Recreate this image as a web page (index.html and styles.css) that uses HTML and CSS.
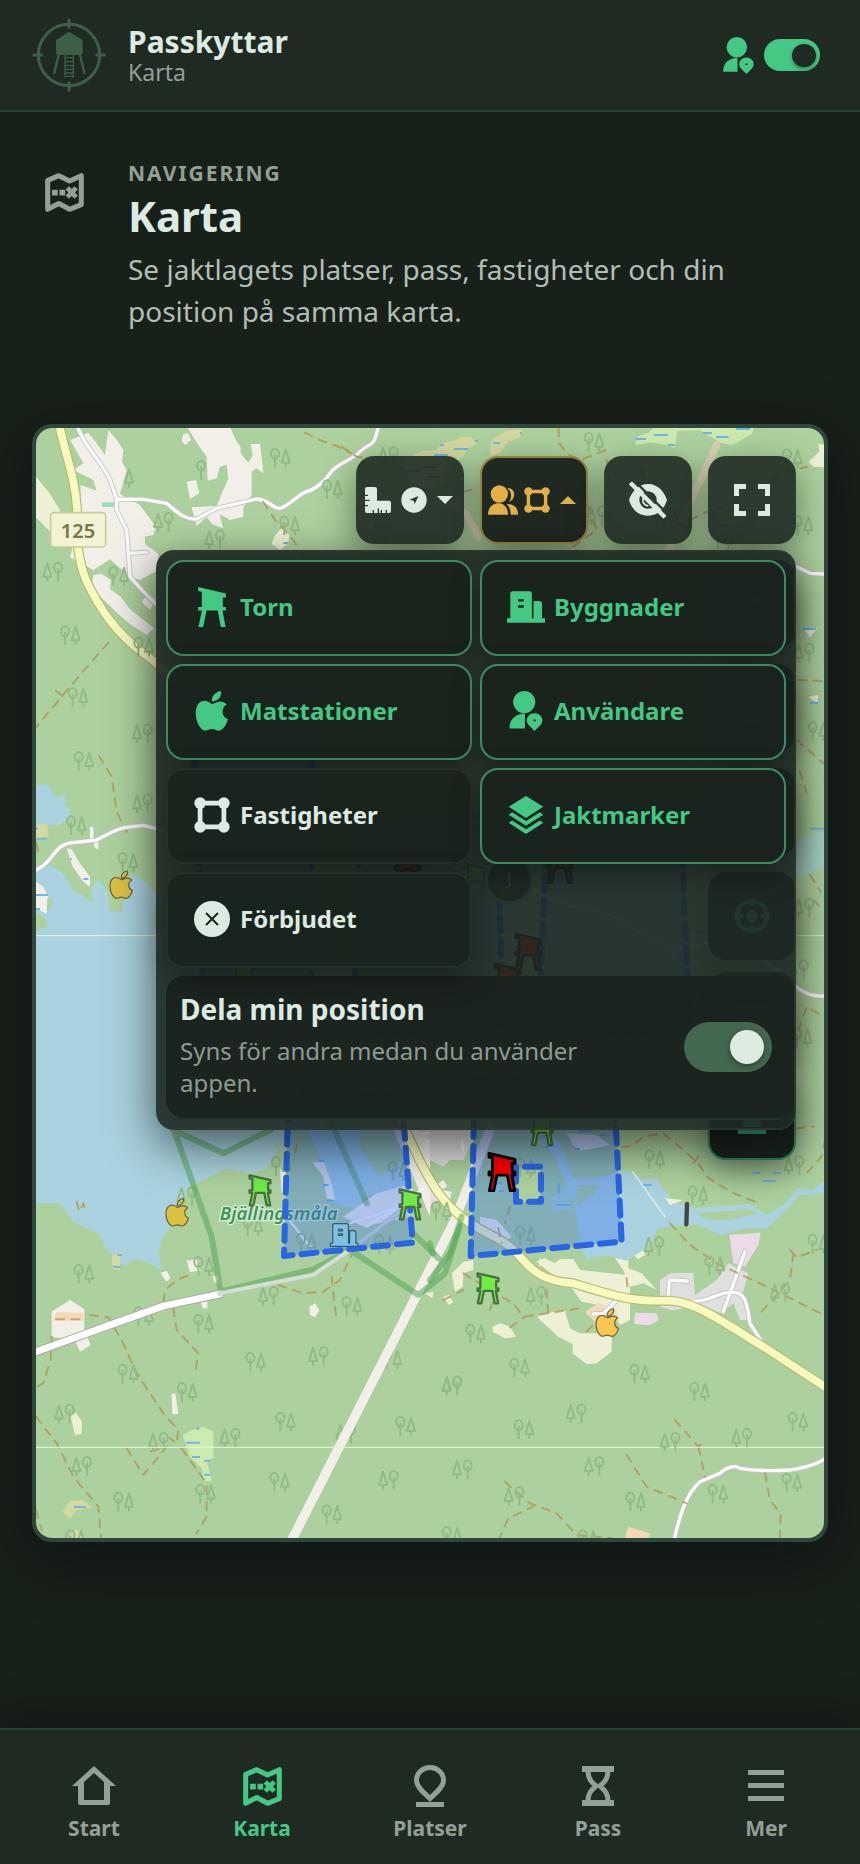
FILE: index.html
```html
<!DOCTYPE html>
<html lang="sv">
<head>
<meta charset="utf-8">
<meta name="viewport" content="width=device-width, initial-scale=1">
<title>Passkyttar – Karta</title>
<link rel="stylesheet" href="styles.css">
</head>
<body>
<svg class="sprite" aria-hidden="true">
  <symbol id="tower" viewBox="0 0 82 118" overflow="visible"><path d="M0 0 82 19V32L73 31V59H82V69H72L81 118H67L58 69H25L15 118H1L11 69H0V59H11V14L0 12Z"/></symbol>
  <symbol id="apple" viewBox="0 0 96 118" overflow="visible"><path d="M74 0C78 17 66 30 48 31C45 16 58 3 74 0ZM50 38C60 35 76 22 92 40C74 48 75 76 95 83C91 98 84 109 75 115C63 121 59 112 48 112C37 112 33 120 21 115C7 104 0 84 0 64C1 34 18 25 34 30C41 32 45 38 50 38Z"/></symbol>
  <symbol id="building" viewBox="0 0 116 96" overflow="visible"><path fill-rule="evenodd" d="M0 82H10V8Q10 0 18 0H68Q76 0 76 8V82H81V30H98Q107 30 107 39V82H116V96H0ZM34 24V31H51V24ZM34 43V50H51V43Z"/></symbol>
  <symbol id="userpin" viewBox="0 0 92 112"><circle cx="41" cy="31" r="31"/><path d="M0 105V98C2 76 20 64 43 63V105Z"/><path fill-rule="evenodd" d="M70 112 54 96C41 82 51 62 70 62S99 82 86 96ZM67 80V85H73V80Z"/></symbol>
  <symbol id="polygon" viewBox="0 0 106 106"><path d="M18 18H88V88H18Z" fill="none" stroke="currentColor" stroke-width="14"/><circle cx="18" cy="18" r="17"/><circle cx="88" cy="18" r="17"/><circle cx="18" cy="88" r="17"/><circle cx="88" cy="88" r="17"/></symbol>
  <symbol id="layers" viewBox="0 0 102 112"><path d="M51 0 102 32 51 65 0 32Z"/><path d="M0 55 10 48 51 74 92 48 102 55 51 88Z"/><path d="M0 79 10 72 51 98 92 72 102 79 51 112Z"/></symbol>
  <symbol id="map" viewBox="0 0 116 116"><path d="M8 22 41 8 73 24 108 8V94L73 108 41 91 8 108Z" fill="none" stroke="currentColor" stroke-width="15" stroke-linejoin="round"/><path d="M21 50H38V67H21ZM43 50H60V67H43Z"/><path d="M71 49 88 67M88 49 71 67" stroke="currentColor" stroke-width="14" fill="none" stroke-linecap="square"/></symbol>
  <symbol id="hourglass" viewBox="0 0 32 40"><path d="M0 0H32V6H0ZM0 34H32V40H0Z"/><path d="M6 5C6 14 11 17 14 20C11 23 6 26 6 35M26 5C26 14 21 17 18 20C21 23 26 26 26 35" fill="none" stroke="currentColor" stroke-width="5"/></symbol>
</svg>

<header class="topbar">
  <svg class="logo" viewBox="0 0 222 222" aria-hidden="true">
    <g fill="none" stroke="currentColor" stroke-width="9" stroke-linecap="round"><circle cx="111" cy="111" r="92"/><path d="M111 5V28M111 194V217M5 111H28M194 111H217"/></g>
    <path fill="currentColor" d="M111 41 152 66V104Q152 111 145 111H79Q72 111 72 104V66Z"/>
    <path fill="none" stroke="currentColor" stroke-width="7" d="M80 110 66 168M144 110 158 168"/>
    <path fill="none" stroke="currentColor" stroke-width="4" d="M99 110V179M124 110V179M99 119H124M99 131H124M99 143H124M99 154H124M99 165H124M99 175H124"/>
  </svg>
  <div class="brand"><strong class="brand-name">Passkyttar</strong><span class="brand-page">Karta</span></div>
  <label class="live">
    <svg class="live-icon" aria-hidden="true"><use href="#userpin"/></svg>
    <input class="switch switch-small" type="checkbox" role="switch" aria-label="Dela position" checked>
  </label>
</header>

<main class="page">
  <section class="intro">
    <svg class="intro-icon" aria-hidden="true"><use href="#map"/></svg>
    <div>
      <p class="eyebrow">NAVIGERING</p>
      <h1 class="title">Karta</h1>
      <p class="lead">Se jaktlagets platser, pass, fastigheter och din position på samma karta.</p>
    </div>
  </section>

  <section class="map" aria-label="Karta">
    <svg class="canvas" viewBox="108 1284 2364 3330" preserveAspectRatio="xMidYMid slice">
      <defs>
        <g id="t1" class="tree"><ellipse cx="13" cy="16" rx="12" ry="15"/><path d="M13 18V57M45 45V57M45 3 57 43H33Z"/></g>
        <g id="t2" class="tree"><path d="M14 45V57M14 3 26 43H2ZM46 18V57"/><ellipse cx="46" cy="16" rx="12" ry="15"/></g>
      </defs>
      <rect class="forest" x="0" y="1200" width="2600" height="3500"/>

      <!-- north-west -->
      <g transform="translate(90 1260)">
        <path class="field" d="M18 170 55 215 90 270 70 345 18 292Z"/>
        <path class="town" d="M120 60 175 38 200 70 225 105 235 30 262 62 280 90 276 125 290 150 270 222 330 255 355 290 378 320 370 345 345 350 345 372 385 402V450L330 480 300 470 240 418 190 450 120 412 150 290 152 195 200 212 190 180 130 150 160 130Z"/>
        <path class="town" d="M190 465 215 462 243 480 240 507 272 530 300 568 372 625 350 645 300 612 268 585 185 505ZM335 545 355 520 378 540 360 570Z"/>
        <path class="town" d="M460 42 475 40 483 60 465 75 455 62ZM470 20H600L620 65 632 80 632 100 655 128 668 105 662 72 690 72 695 110 700 160 680 145 665 155V225L640 262V290L600 300 568 282 580 325 545 312 530 290 500 318 485 262 560 258 595 175 590 135 570 140 560 175 533 182 530 110 505 75ZM470 185 498 180 508 220 480 237Z"/>
        <path class="field" d="M735 345 755 325 778 345 775 370 750 390 725 372Z"/>
        <path class="water" d="M18 1095 50 1093 80 1132 105 1125 105 1155 120 1170V1192L90 1215 18 1213Z"/>
        <path class="marsh" d="M18 1213H52L55 1260H18Z"/>
        <path class="pool" d="M216 247H252V261H216Z"/>
        <g class="reed"><path d="M20 1256H52M760 369H775M18 1226H24"/></g>
        <path class="casing-y" d="M85 0C100 90 137 170 141 270C138 370 145 420 168 480C210 570 260 640 340 700C400 740 450 800 520 860"/>
        <path class="road-y" d="M85 0C100 90 137 170 141 270C138 370 145 420 168 480C210 570 260 640 340 700C400 740 450 800 520 860"/>
        <path class="casing" d="M135 0C160 80 210 115 240 180L260 237V270L290 330 295 400 300 470 340 515 385 560M258 237 340 238 410 250C450 285 470 300 500 297L560 265 680 237C720 240 730 268 750 265S810 220 830 215S880 190 900 160S960 125 990 95S1030 90 1045 20M297 400 350 397"/>
        <path class="road" d="M135 0C160 80 210 115 240 180L260 237V270L290 330 295 400 300 470 340 515 385 560M258 237 340 238 410 250C450 285 470 300 500 297L560 265 680 237C720 240 730 268 750 265S810 220 830 215S880 190 900 160S960 125 990 95S1030 90 1045 20M297 400 350 397M185 1225V1255"/>
        <path class="trail" d="M825 38 870 60 920 78 965 100M700 245 735 300 790 360 820 410M235 668 150 765 95 830 18 922M78 812 97 828 80 850M207 1008 245 1070 260 1175 290 1235"/>
        <use href="#t1" x="722" y="85"/><use href="#t1" x="878" y="180"/><use href="#t2" x="370" y="278"/><use href="#t1" x="750" y="288"/><use href="#t2" x="524" y="330"/><use href="#t2" x="38" y="427"/><use href="#t1" x="237" y="440"/><use href="#t1" x="92" y="618"/><use href="#t1" x="312" y="652"/><use href="#t1" x="115" y="803"/><use href="#t2" x="307" y="912"/><use href="#t1" x="133" y="995"/><use href="#t2" x="307" y="1122"/><use href="#t1" x="110" y="1188"/>
        <g class="tree"><ellipse cx="513" cy="137" rx="12" ry="15"/><path d="M513 140V180M297 190V203M297 148 309 188H285Z"/></g>
        <rect class="shield" x="62" y="278" width="165" height="103" rx="10"/>
        <text class="shield-text" x="144" y="353" text-anchor="middle">125</text>
      </g>

      <!-- north-east -->
      <g transform="translate(1020 1260)">
        <path class="marsh" d="M185 125 245 92 290 90 300 72 345 62 365 50 395 52 412 70 380 90 370 112 330 130 320 180 270 205 215 190ZM450 95 455 60 500 32 545 28 540 52 505 65 480 100 450 108Z"/>
        <path class="meadow" d="M885 75 895 48 925 38 940 24H1242L1235 42 1205 60 1180 75 1145 70 1080 30 1012 32 1005 85 970 72 930 68Z"/>
        <path class="field" d="M1460 75 1435 72 1438 95 1405 125 1420 140 1460 142Z"/>
        <path class="cut" d="M1130 75 980 400M335 245 380 285 415 350"/>
        <g class="reed"><path d="M300 75H312M342 87H384M282 105H324M460 69H480M404 63H414M540 39H546M250 141H294M196 153H240M258 171H300M942 45H984M1088 39H1116M1128 51H1166M1188 27H1230M887 57H918M984 75H1004M1152 315H1194M1216 303H1250M1104 333H1146"/></g>
        <path class="trail" d="M655 25 658 70 680 100 720 120 800 90M700 380 770 330 720 190M800 120 810 180M1010 320 1090 280 1200 240 1330 160 1400 140M5 80 50 110 120 120M370 215 410 205"/>
        <path class="casing" d="M1370 440 1410 460 1470 463"/><path class="road" d="M1370 440 1410 460 1470 463"/>
        <use href="#t2" x="115" y="80"/><use href="#t1" x="733" y="37"/><use href="#t1" x="1328" y="87"/><use href="#t2" x="740" y="258"/><use href="#t1" x="1360" y="288"/><use href="#t2" x="92" y="308"/><use href="#t1" x="860" y="145"/><use href="#t1" x="1120" y="330"/><use href="#t1" x="960" y="275"/>
      </g>

      <!-- east shore and the middle under the panel -->
      <g transform="translate(1410 2490)">
        <path class="water" d="M-300 60 100 -60 640 -100 980 30 1080 -5V110L978 142 640 120 660 420 500 640 0 560Z" opacity=".6"/>
        <path class="field" d="M1000 -605H1042L1020 -577ZM1015 -400 1045 -405 1042 -380Z"/>
        <g class="reed"><path d="M997 -603H1038M1020 -381H1044M1020 -4H1070"/></g>
        <path class="trail" d="M985 -450 1060 -447M980 -270 1060 -200M990 -175 1010 -110M1020 135 1052 185M1030 210 1060 240M985 600 1010 530 1060 560"/>
        <path class="casing" d="M-300 200 0 100 120 130C230 210 330 240 400 250S540 350 620 350S760 320 850 370S980 510 1070 497"/><path class="road" d="M-300 200 0 100 120 130C230 210 330 240 400 250S540 350 620 350S760 320 850 370S980 510 1070 497"/>
        <use href="#t2" x="972" y="-560"/><use href="#t1" x="1015" y="-325"/><use href="#t2" x="972" y="205"/><use href="#t2" x="955" y="390"/><use href="#t1" x="968" y="595"/>
      </g>

      <!-- lake -->
      <g transform="translate(90 2520)">
        <path class="water" d="M18 95 60 75 95 95 130 150 190 188 182 145 205 120 232 150 240 215 275 216 300 100 340 120 378 160 900 200 1000 700 870 870H790L760 905 710 988 660 1000 590 985 540 1010 480 1040 440 1130 400 1190 385 1230 395 1290 350 1265 310 1255 285 1280 230 1230 205 1180 130 1145 90 1090 18 1090Z"/>
        <path class="town" d="M110 25 125 28 150 70 180 110V140L160 125 128 80ZM18 125 40 140 55 170 50 222 18 205ZM190 0H205V30L193 20Z"/>
        <path class="forest" d="M52 175 68 172 66 195 50 215ZM18 215 50 240 52 265 18 268ZM375 190H400V280L372 260Z"/>
        <path class="casing" d="M0 95C30 90 50 70 65 50S95 10 130 8L200 0C240 -20 260 -35 290 -38L340 -44 400 -28"/>
        <path class="road" d="M0 95C30 90 50 70 65 50S95 10 130 8L200 0C240 -20 260 -35 290 -38L340 -44 400 -28"/>
        <path class="water" d="M830 860H990L985 915 1050 1012 1130 950V1035L1000 1070 985 1110 910 1090 890 1000 870 950Z"/>
        <path class="town" d="M848 968 880 960 905 1030 915 1080 890 1075 880 1010ZM750 990 770 985 775 1040 755 1060ZM940 1130 1040 1060 1130 1035 1160 1060 1140 1130 1000 1160ZM1090 870H1200V1130L1150 1010Z"/>
        <path class="grey" d="M1130 840H1330V900L1300 960 1240 960 1200 900Z"/>
        <path class="road thin" d="M1180 880 1240 870 1290 870 1300 930M1220 890 1235 960M1190 905 1290 900M1010 1160 1090 1110 1200 1030M770 1130 860 1245M960 1150 1110 1100"/>
        <g class="reed"><path d="M18 165H54M18 207H30M160 117H175M864 963H884M878 1035H896M890 1082H912M120 57H125"/></g>
        <path class="trail" d="M800 915 790 960M140 1085 148 1115 160 1090 168 1115M20 10 25 40"/>
        <path class="seam" d="M0 287H2500"/>
        <use href="#t1" x="265" y="38"/><use href="#t1" x="725" y="950"/><use href="#t1" x="1075" y="965"/><use href="#t2" x="440" y="1040"/><use href="#t1" x="640" y="1130"/>
      </g>

      <!-- south-west -->
      <g transform="translate(90 3690)">
        <path class="town" d="M65 245 120 210 163 238V300L182 345 150 365 135 330 65 320ZM470 92 500 88 512 122 480 126ZM392 128 410 122 422 145 408 155ZM548 138 565 138 562 160 552 155ZM512 215 532 215 532 235 518 235ZM838 230 855 220 868 240 855 262 840 255ZM425 492 436 490 445 552 427 553Z"/>
        <path class="orange" d="M78 246 160 248V272H72Z"/>
        <path class="marsh" d="M245 75 280 65 270 85 270 122 248 115ZM97 845 120 812 155 810 188 832 140 840 120 868ZM125 905 145 898 162 930H120Z"/>
        <path class="field" d="M122 560 138 548 156 575 155 612 135 614ZM1185 190 1210 185 1208 205ZM1240 200 1260 195V225Z"/>
        <path class="meadow" d="M458 615 485 600 520 590 550 605V685L530 690 545 752 522 755 515 715 480 680Z"/>
        <g class="reed"><path d="M262 75H276M250 111H272M468 638H510M498 596H508M486 681H510M522 692H541M522 734H541M132 831H168"/></g>
        <path class="trail" d="M180 255 235 262 280 340 320 430 400 550 445 600 440 640 420 625M290 655 340 735 410 650 360 665M455 655 530 760 530 860 500 910M430 235 440 300 505 370 495 430M400 215 405 180 440 150 490 130M65 320 62 390 40 460 20 470M18 560 80 640 130 740 205 830 213 925M18 840 35 900M745 165 820 190 880 185 930 150 965 75M905 140 910 190 920 275M78 268 160 268"/>
        <use href="#t1" x="133" y="103"/><use href="#t1" x="492" y="80"/><use href="#t2" x="685" y="170"/><use href="#t1" x="937" y="200"/><use href="#t1" x="492" y="253"/><use href="#t2" x="835" y="350"/><use href="#t1" x="648" y="367"/><use href="#t1" x="265" y="403"/><use href="#t1" x="443" y="458"/><use href="#t2" x="73" y="523"/><use href="#t1" x="738" y="547"/><use href="#t1" x="1098" y="560"/><use href="#t2" x="355" y="607"/><use href="#t2" x="570" y="595"/><use href="#t2" x="125" y="680"/><use href="#t1" x="720" y="727"/><use href="#t2" x="1045" y="722"/><use href="#t1" x="252" y="787"/><use href="#t1" x="498" y="763"/><use href="#t1" x="877" y="825"/><use href="#t1" x="312" y="230"/><use href="#t1" x="1057" y="360"/><use href="#t2" x="1235" y="440"/><use href="#t2" x="917" y="583"/><use href="#t1" x="800" y="10"/><use href="#t1" x="1035" y="15"/><use href="#t1" x="108" y="900"/>
        <path class="rail" d="M770 960 1270 -20 1380 -300"/>
        <path class="reserve" d="M430 -300 580 -230 720 -300M432 -300 545 20 572 185 850 118 960 60 1165 195 1245 130 1290 -10M1150 10 1225 85M900 -330 1010 -80"/>
        <path class="casing wide" d="M0 372 240 285 400 228 570 192"/><path class="road wide" d="M0 372 240 285 400 228 570 192"/>
        <path class="casing" d="M570 190 850 135 960 60 1110 -55"/><path class="road tint" d="M570 190 850 135 960 60 1110 -55"/>
      </g>

      <!-- south-east -->
      <g transform="translate(1290 3360)">
        <path class="grey" d="M0 20 60 0H110L90 90 40 140 0 120Z"/>
        <path class="pink" d="M0 200 25 240 0 262ZM615 578 680 580 686 600 660 616 612 612ZM898 345 992 338 985 375 945 440 910 430Z"/>
        <path class="town" d="M5 205 40 180 52 198 35 210 65 215 60 240 30 235ZM150 60 185 30 150 130ZM330 415 345 425 325 440Z"/>
        <path class="field" d="M100 425 130 420 130 450 100 460 98 500 75 515 65 460ZM40 535 55 525 70 545 58 555ZM320 425 345 415 375 430 390 418 430 417 450 450 590 465 600 510 600 600 570 615 540 560 455 545 425 505 350 450ZM555 415H595V445L635 460 680 510 640 490 600 500 580 450ZM610 405 640 390 645 405 625 418ZM320 590 370 575 405 572 420 625 450 640H545V695L500 730 470 733 428 700V672L385 650ZM188 620 210 610 240 620 258 650 225 655 188 635Z"/>
        <path class="orange" d="M465 575 505 548 560 568 562 600 500 612ZM595 1220 660 1240 655 1262H583Z"/>
        <path class="pool2" d="M170 180 210 185 215 215 180 225ZM360 230 400 200 420 190 420 270 375 278 358 260Z"/>
        <path class="water" d="M350 50 385 60 405 110 430 175 520 172 560 155 608 155 640 180 680 175 700 205 730 245 790 265 960 252 1010 285 1060 255 1105 205 1150 210 1192 175V220L1110 225 1060 280 1010 325 950 325 870 345 800 312 720 320 682 325 670 360 640 390 590 422 540 408 470 418 450 370 430 240 400 170 340 50Z"/>
        <path class="forest" d="M800 280 960 268 985 280 900 300 830 298ZM440 195 515 195 490 225 440 260Z"/>
        <path class="grey" d="M690 480 720 460 790 458 795 525 860 480 895 430 955 460 935 530 955 600 930 600 910 550 875 580 820 558 725 570 690 560Z"/>
        <path class="field" d="M705 235 760 240 720 255Z"/>
        <path class="town" d="M410 40 500 45 540 75 450 92 430 75ZM150 290 200 300 245 350 230 362 150 330Z"/>
        <g class="reed"><path d="M445 33H486M510 45H528M435 87H450M330 50H345M342 81H356M640 195H665M378 255H420M386 190V220M200 190H215M206 213H222M968 159H990M1028 159H1052M998 183H1038"/></g>
        <path class="casing" d="M715 535 718 480 772 483M770 545C850 545 850 520 900 517S950 550 960 610L998 670M945 395 880 575M490 582 520 580 560 540"/>
        <path class="road" d="M715 535 718 480 772 483M770 545C850 545 850 520 900 517S950 550 960 610L998 670M945 395 880 575M490 582 520 580 560 540"/>
        <path class="casing-y" d="M-110 -60C-60 60 -10 190 60 260S190 340 240 380S300 480 430 490C560 530 600 545 720 542C800 545 900 620 1000 680L1200 810"/>
        <path class="road-y" d="M-110 -60C-60 60 -10 190 60 260S190 340 240 380S300 480 430 490C560 530 600 545 720 542C800 545 900 620 1000 680L1200 810"/>
        <path class="path" d="M608 155 705 290"/>
        <path class="dam" d="M771 252 769 313"/>
        <path class="casing" d="M730 1270C750 1180 770 1120 810 1085L870 1060C890 1040 915 1035 930 1045C990 1055 1080 1050 1080 1050S1160 1040 1192 1010"/>
        <path class="road" d="M730 1270C750 1180 770 1120 810 1085L870 1060C890 1040 915 1035 930 1045C990 1055 1080 1050 1080 1050S1160 1040 1192 1010"/>
        <path class="trail" d="M575 80 605 78 640 50 700 40 760 90 805 130 830 170 900 215 975 245M805 110 790 130M1185 60 1175 110 1120 170M1100 25 1150 20M720 310 780 375 860 430 1000 495 1192 590M1080 390 1100 412 1160 390M1090 400 1080 480 990 580M100 460 180 510 250 550 280 590 350 580 450 565M350 510 355 590M240 622 285 590M40 540 100 510M180 570 190 540M590 475 592 500M470 635 510 595M735 900 805 980 822 965M805 980 825 1070M590 1005 650 1100 770 1150M225 1085 300 1150 380 1180 440 1245 550 1255M205 1262 235 1195 310 1160M1005 1060 1020 1140 1052 1180 1050 1262M240 260 225 310M205 325 215 370"/>
        <path class="reserve" d="M0 480 60 400 95 290M0 370 10 400"/>
        <path class="seam" d="M-1300 982H1300"/>
        <use href="#t1" x="645" y="90"/><use href="#t2" x="1062" y="108"/><use href="#t1" x="775" y="198"/><use href="#t1" x="258" y="318"/><use href="#t1" x="1135" y="343"/><use href="#t2" x="642" y="350"/><use href="#t1" x="825" y="408"/><use href="#t2" x="1020" y="490"/><use href="#t2" x="288" y="500"/><use href="#t1" x="108" y="613"/><use href="#t1" x="240" y="715"/><use href="#t1" x="600" y="733"/><use href="#t1" x="780" y="787"/><use href="#t2" x="37" y="768"/><use href="#t2" x="408" y="852"/><use href="#t1" x="253" y="900"/><use href="#t1" x="1075" y="877"/><use href="#t2" x="690" y="937"/><use href="#t2" x="905" y="925"/><use href="#t2" x="67" y="1020"/><use href="#t2" x="462" y="1010"/><use href="#t1" x="1057" y="1060"/><use href="#t1" x="835" y="1093"/><use href="#t2" x="222" y="1100"/><use href="#t1" x="588" y="1117"/><use href="#t1" x="37" y="1220"/><use href="#t1" x="445" y="1230"/><use href="#t1" x="258" y="115"/><use href="#t1" x="5" y="245"/><use href="#t2" x="855" y="50"/>
      </g>

      <text class="place" x="836" y="3660" text-anchor="middle">Bjällingsmåla</text>

      <!-- hunting grounds -->
      <path class="zone" d="M865 3300 1205 3280 1238 3728 852 3768Z"/>
      <path class="zone" fill-rule="evenodd" d="M1425 3235 1840 3225 1865 3725 1412 3768ZM1548 3500V3605H1623V3500Z"/>
      <path class="zone" d="M1638 2550 2045 2530 2070 3090 1615 3120Z"/>
      <path class="zone" d="M1080 2460 1490 2440 1510 3080 1060 3110Z"/>
      <path class="zone" d="M575 2070 940 2060 930 3000 610 2980Z"/>

      <!-- posts and feeding places -->
      <g class="pin green"><use href="#tower" x="748" y="3526" width="64" height="90"/><use href="#tower" x="1198" y="3568" width="64" height="90"/><use href="#tower" x="1432" y="3820" width="64" height="90"/><use href="#tower" x="1594" y="3345" width="64" height="90"/><use href="#tower" x="1395" y="2590" width="64" height="90"/><use href="#tower" x="700" y="2885" width="64" height="90"/></g>
      <g class="pin red"><use href="#tower" x="1465" y="3460" width="82" height="112"/><use href="#tower" x="1545" y="2802" width="80" height="108"/><use href="#tower" x="1483" y="2892" width="80" height="108"/><use href="#tower" x="1640" y="2540" width="80" height="108"/><use href="#tower" x="1182" y="2545" width="80" height="108"/><use href="#tower" x="840" y="3180" width="80" height="108"/></g>
      <g class="pin amber"><use href="#apple" x="330" y="2612" width="68" height="84"/><use href="#apple" x="498" y="3595" width="68" height="84"/><use class="orange-pin" href="#apple" x="1788" y="3926" width="68" height="84"/></g>
      <g class="pin blue"><use href="#building" x="991" y="3670" width="83" height="70"/></g>
      <circle class="member" cx="1528" cy="2640" r="68"/><text class="member-text" x="1528" y="2655" text-anchor="middle">J</text>
      <circle class="member" cx="1338" cy="2835" r="58"/><text class="member-text" x="1338" y="2855" text-anchor="middle">A</text>
    </svg>

    <div class="side">
      <button class="side-btn" type="button" aria-label="Navigera"><svg viewBox="0 0 36 36"><path d="M2 4 34 14 18 18 14 34Z"/></svg></button>
      <button class="side-btn" type="button" aria-label="Kompass"><svg viewBox="0 0 36 36"><path fill-rule="evenodd" d="M18 1A17 17 0 1 0 18 35A17 17 0 1 0 18 1ZM25 11 20 20 11 25 16 16Z"/></svg></button>
      <button class="side-btn" type="button" aria-label="Väder"><svg viewBox="0 0 36 36"><path d="M8 28A8 8 0 0 1 8 12A11 11 0 0 1 28 14A7 7 0 0 1 28 28Z"/></svg></button>
      <div class="side-group">
        <button class="side-btn mint" type="button" aria-label="Min position"><svg viewBox="0 0 36 36"><circle cx="18" cy="18" r="15" fill="none" stroke="currentColor" stroke-width="5"/><circle cx="18" cy="18" r="6"/><path d="M18 3V9M18 27V33M3 18H9M27 18H33" stroke="currentColor" stroke-width="5"/></svg></button>
        <button class="side-btn" type="button" aria-label="Lista"><svg viewBox="0 0 36 36"><path d="M2 6H34V10H2ZM8 16H28V20H8ZM12 26H24V30H12Z"/></svg></button>
        <button class="side-btn mint outlined" type="button" aria-label="Pass"><svg viewBox="0 0 36 36"><path d="M4 0H32V4H4ZM4 31H32V36H4ZM8 6H28C28 12 24 15 18 17C12 15 8 12 8 6ZM8 29C8 22 12 19 18 18C24 19 28 22 28 29Z"/></svg></button>
      </div>
    </div>

    <div class="controls">
      <div class="toolbar">
        <button class="tool tool-wide" type="button" aria-label="Mätverktyg">
          <svg class="i26" viewBox="0 0 78 78"><path d="M6 0H30Q36 0 36 6V41H72Q78 41 78 47V72Q78 78 72 78H66V69H62V78H51V69H47V78H42V64H38V78H27V69H23V78H6Q0 78 0 72V58H9V54H0V42H14V38H0V27H9V23H0V6Q0 0 6 0Z"/></svg>
          <svg class="i26" viewBox="0 0 76 76"><path fill-rule="evenodd" d="M38 1A37 37 0 1 0 38 75A37 37 0 1 0 38 1ZM51 26 40 50 37 40 25 37Z"/></svg>
          <svg class="caret" viewBox="0 0 16 8"><path d="M0 0H16L8 8Z"/></svg>
        </button>
        <button class="tool tool-wide tool-active" type="button" aria-expanded="true" aria-label="Kartlager">
          <svg class="i30" viewBox="0 0 90 88"><circle cx="34" cy="26" r="26"/><path d="M0 88C0 66 14 54 31 54S60 66 60 88ZM58 8C84 8 86 42 62 51C72 40 72 20 58 8ZM56 56C78 56 90 66 90 88H68C68 74 64 64 56 56Z"/></svg>
          <svg class="i26"><use href="#polygon"/></svg>
          <svg class="caret" viewBox="0 0 16 8"><path d="M0 8H16L8 0Z"/></svg>
        </button>
        <button class="tool" type="button" aria-label="Dölj allt">
          <svg class="i38" viewBox="0 0 114 112"><path fill-rule="evenodd" d="M57 8C88 8 106 32 114 56C106 82 88 103 57 103C26 103 8 82 0 56C8 32 26 8 57 8ZM57 30A26 26 0 1 0 57 82A26 26 0 1 0 57 30Z"/><path d="M42 50V62Q46 72 58 74" fill="none" stroke="currentColor" stroke-width="5"/><path class="slash-gap" d="M14 -4 118 100"/><path d="M4 4 108 108" stroke="currentColor" stroke-width="13"/></svg>
        </button>
        <button class="tool" type="button" aria-label="Helskärm">
          <svg class="i36" viewBox="0 0 36 32"><path d="M0 0H12V5H5V12H0ZM24 0H36V12H31V5H24ZM0 20H5V27H12V32H0ZM31 20H36V32H24V27H31Z"/></svg>
        </button>
      </div>

      <div class="panel">
        <div class="layers">
          <button class="layer on" type="button" aria-pressed="true"><svg class="i40"><use href="#tower"/></svg>Torn</button>
          <button class="layer on" type="button" aria-pressed="true"><svg class="i38 wide-icon"><use href="#building"/></svg>Byggnader</button>
          <button class="layer on" type="button" aria-pressed="true"><svg class="i40"><use href="#apple"/></svg>Matstationer</button>
          <button class="layer on" type="button" aria-pressed="true"><svg class="i40"><use href="#userpin"/></svg>Användare</button>
          <button class="layer" type="button" aria-pressed="false"><svg class="i36"><use href="#polygon"/></svg>Fastigheter</button>
          <button class="layer on" type="button" aria-pressed="true"><svg class="i38"><use href="#layers"/></svg>Jaktmarker</button>
          <button class="layer" type="button" aria-pressed="false"><svg class="i36" viewBox="0 0 36 36"><circle cx="18" cy="18" r="18"/><path d="M12 12 24 24M24 12 12 24" stroke="#1b241d" stroke-width="2"/></svg>Förbjudet</button>
        </div>
        <div class="share">
          <label class="share-text" for="share"><strong class="share-title">Dela min position</strong><span class="share-note">Syns för andra medan du använder appen.</span></label>
          <input class="switch switch-large" id="share" type="checkbox" role="switch" checked>
        </div>
        <hr class="rule">
      </div>
    </div>
  </section>
</main>

<nav class="tabs" aria-label="Huvudmeny">
  <a class="tab" href="#start"><span class="tab-icon"><svg width="44" height="40" viewBox="0 0 44 40"><path fill-rule="evenodd" d="M22 0 44 20H38V37Q38 39 36 39H8Q6 39 6 37V20H0ZM22 7 12 16V34H32V16Z"/></svg></span>Start</a>
  <a class="tab current" href="#karta" aria-current="page"><span class="tab-icon"><svg width="39" height="39"><use href="#map"/></svg></span>Karta</a>
  <a class="tab" href="#platser"><span class="tab-icon"><svg width="32" height="42" viewBox="0 0 32 42"><path fill-rule="evenodd" d="M16 37C10 31 0 24 0 15A16 15 0 0 1 32 15C32 24 22 31 16 37ZM16 30C21 25 27 20 27 15A11 10 0 0 0 5 15C5 20 11 25 16 30ZM2 37H30V42H2Z"/></svg></span>Platser</a>
  <a class="tab" href="#pass"><span class="tab-icon"><svg width="32" height="40"><use href="#hourglass"/></svg></span>Pass</a>
  <a class="tab" href="#mer"><span class="tab-icon"><svg width="36" height="32" viewBox="0 0 36 32"><path d="M0 0H36V5H0ZM0 13H36V18H0ZM0 26H36V31H0Z"/></svg></span>Mer</a>
</nav>
</body>
</html>
```
FILE: styles.css
```css
* { box-sizing: border-box; }

body {
  margin: 0;
  min-height: 100vh;
  display: flex;
  flex-direction: column;
  background: #18201a;
  color: #dceae1;
  font-family: "Noto Sans", sans-serif;
}

button { font: inherit; color: inherit; cursor: pointer; }
svg { fill: currentColor; flex: none; }
.sprite { position: absolute; width: 0; height: 0; }

/* top bar */
.topbar {
  display: flex;
  align-items: center;
  gap: 22px;
  min-height: 112px;
  padding: 0 40px 0 32px;
  background: #1f2a22;
  border-bottom: 2px solid #2b4035;
}
.logo { width: 74px; height: 74px; color: #3b6047; }
.brand { display: flex; flex-direction: column; flex: 1; }
.brand-name { font-size: 30px; line-height: 34px; font-weight: 700; }
.brand-page { font-size: 23px; line-height: 27px; color: #93a097; }
.live { display: flex; align-items: center; gap: 10px; }
.live-icon { width: 31px; height: 37px; color: #45c883; }

/* switches */
.switch {
  appearance: none;
  margin: 0;
  display: flex;
  align-items: center;
  justify-content: flex-end;
  flex: none;
  border-radius: 25px;
}
.switch::before { content: ""; border-radius: 50%; }
.switch-small { width: 56px; height: 32px; padding: 4px; background: #45c883; }
.switch-small::before { width: 24px; height: 23px; background: #1f2a22; box-shadow: 0 2px 4px rgba(0, 0, 0, .35); }
.switch-large { width: 88px; height: 50px; padding: 8px; background: #44684f; }
.switch-large::before { width: 34px; height: 34px; background: #dceae1; box-shadow: 0 2px 6px rgba(0, 0, 0, .4); }

/* page intro */
.page { flex: 1; padding: 47px 32px 0; }
.intro { display: flex; gap: 32px; margin-bottom: 92px; }
.intro-icon { width: 39px; height: 39px; margin: 14px 12px 0 13px; color: #93a097; }
.eyebrow { margin: 0 0 5px; font-size: 21px; line-height: 28px; font-weight: 700; letter-spacing: 2px; color: #93a097; }
.title { margin: 0 0 8px; font-size: 42px; line-height: 48px; font-weight: 700; }
.lead { margin: 0; font-size: 28px; line-height: 42px; color: #b1beb5; }

/* map */
.map {
  position: relative;
  overflow: hidden;
  border: 4px solid #2f463b;
  border-radius: 20px;
  box-shadow: 0 16px 60px rgba(0, 0, 0, .35);
}
.canvas { display: block; width: 100%; aspect-ratio: 788 / 1110; }
.canvas path { stroke-linejoin: round; }
.forest { fill: #add19e; }
.water { fill: #aad3df; }
.pool { fill: #99dcc0; }
.pool2 { fill: #aad3c6; }
.field { fill: #eef0d5; }
.town { fill: #f2efe9; }
.grey { fill: #dfdfdf; }
.pink { fill: #ebdbe8; }
.orange { fill: #f3d9b8; }
.marsh { fill: #d3d9a0; }
.meadow { fill: #cdebb0; }
.tree { fill: none; stroke: #94bb87; stroke-width: 6; }
.reed { fill: none; stroke: #70b7e6; stroke-width: 6; }
.casing, .casing-y, .road, .road-y, .trail, .rail, .cut, .path, .dam, .seam, .reserve { fill: none; stroke-linecap: round; }
.casing { stroke: #c4c4c4; stroke-width: 15; }
.road { stroke: #fafafa; stroke-width: 10; }
.wide.casing { stroke: #a9a9a9; stroke-width: 26; }
.wide.road { stroke: #fff; stroke-width: 20; }
.road.tint { stroke: #cfe5d0; }
.road.thin { stroke-width: 7; }
.casing-y { stroke: #b9ba72; stroke-width: 30; }
.road-y { stroke: #f7fabf; stroke-width: 23; }
.rail { stroke: #f2efe9; stroke-width: 28; }
.cut { stroke: #d8d3b2; stroke-width: 22; }
.path { stroke: #dfeae6; stroke-width: 5; }
.trail { stroke: #b0914b; stroke-width: 6; stroke-dasharray: 24 22; opacity: .7; }
.dam { stroke: #444; stroke-width: 13; }
.seam { stroke: #e2fbd3; stroke-width: 3; }
.reserve { stroke: #55a85a; stroke-width: 18; opacity: .55; }
.shield { fill: #f2f2d4; stroke: #cccb98; stroke-width: 5; }
.shield-text { font-size: 60px; font-weight: 600; fill: #777646; }
.place { font-size: 56px; font-style: italic; font-weight: 600; fill: #3f9455; stroke: #d8ecd8; stroke-width: 8; paint-order: stroke; }
.zone { fill: rgba(37, 99, 235, .32); stroke: #2a66e4; stroke-width: 18; stroke-dasharray: 45 27; stroke-linecap: round; }
.pin { stroke-width: 9; stroke-linejoin: round; }
.green { fill: #6fec47; stroke: #48703f; }
.red { fill: #f00; stroke: #000; }
.amber { fill: #dcc044; stroke: #66633f; stroke-width: 5; }
.orange-pin { fill: #fbc650; }
.blue { fill: #82c0e0; stroke: #315a75; stroke-width: 5; }
.member { fill: #26332d; stroke: #8ea298; stroke-width: 8; }
.member-text { font-size: 56px; fill: #b5c8bd; }

/* buttons along the right edge of the map */
.side { position: absolute; top: 132px; right: 28px; display: flex; flex-direction: column; gap: 16px; }
.side-group { display: flex; flex-direction: column; gap: 12px; }
.side-btn {
  width: 88px;
  height: 88px;
  padding: 0;
  display: grid;
  place-items: center;
  border: 2px solid #222d26;
  border-radius: 18px;
  background: #1a231d;
  box-shadow: 0 12px 30px rgba(0, 0, 0, .4);
}
.side-btn svg { width: 36px; height: 36px; }
.mint { color: #34a374; }
.outlined { border-color: #2c7f57; }

/* map controls */
.controls { position: absolute; top: 28px; right: 28px; display: flex; flex-direction: column; align-items: flex-end; gap: 6px; }
.toolbar { display: flex; gap: 16px; }
.tool {
  width: 88px;
  height: 88px;
  padding: 0;
  display: flex;
  align-items: center;
  justify-content: center;
  gap: 10px;
  border: 2px solid rgba(47, 63, 52, .6);
  border-radius: 18px;
  background: rgba(27, 38, 32, .88);
  color: #dceae1;
  box-shadow: 0 12px 36px rgba(0, 0, 0, .45);
}
.tool-wide { width: 108px; padding-right: 2px; }
.tool-active { gap: 6px; padding-right: 4px; border-color: #95803d; background: #1f2821; color: #e2b04a; }
.tool-active .caret { margin-left: 4px; }
.caret { width: 16px; height: 8px; }
.i26 { width: 26px; height: 26px; }
.i30 { width: 30px; height: 30px; }
.i36 { width: 36px; height: 36px; }
.i38 { width: 38px; height: 38px; }
.i40 { width: 40px; height: 40px; }
.slash-gap { stroke: #303c33; stroke-width: 7; }

/* layer panel */
.panel {
  width: 640px;
  max-width: 100%;
  padding: 8px;
  border: 2px solid rgba(44, 59, 50, .7);
  border-radius: 18px;
  background: rgba(30, 41, 35, .91);
  box-shadow: 0 16px 48px rgba(0, 0, 0, .6);
}
.layers { display: grid; grid-template-columns: 1fr 1fr; gap: 8px; }
.layer {
  display: flex;
  align-items: center;
  gap: 10px;
  height: 96px;
  padding: 0 26px 2px;
  border: 2px solid #243029;
  border-radius: 18px;
  background: rgba(26, 35, 29, .96);
  font-size: 24px;
  line-height: 32px;
  font-weight: 700;
  box-shadow: 0 10px 28px rgba(0, 0, 0, .35);
}
.layer svg { width: 36px; overflow: visible; }
.layer .wide-icon { width: 38px; margin: 0 -1px; }
.layer.on { border-color: #3f8b62; color: #45c883; }
.share {
  display: flex;
  align-items: center;
  justify-content: space-between;
  gap: 48px;
  margin: 8px -8px 0 0;
  padding: 15px 22px 15px 14px;
  border-radius: 18px;
  background: rgba(26, 35, 29, .95);
}
.share-text { display: flex; flex-direction: column; gap: 8px; padding-bottom: 4px; }
.share-title { font-size: 28px; line-height: 36px; font-weight: 700; }
.share-note { font-size: 24px; line-height: 32px; color: #8e9b92; }
.rule { height: 2px; margin: 0 6px; border: 0; background: #24362b; }

/* bottom tabs */
.tabs {
  display: grid;
  grid-template-columns: repeat(5, 1fr);
  padding: 34px 10px 22px;
  background: #1f2a22;
  border-top: 2px solid #2b4035;
  box-shadow: 0 -8px 40px rgba(0, 0, 0, .25);
}
.tab {
  display: flex;
  flex-direction: column;
  align-items: center;
  gap: 6px;
  color: #93a097;
  font-size: 21px;
  line-height: 28px;
  font-weight: 700;
  text-decoration: none;
}
.tab-icon { height: 44px; display: grid; place-items: center; }
.current { color: #45c883; }
```
